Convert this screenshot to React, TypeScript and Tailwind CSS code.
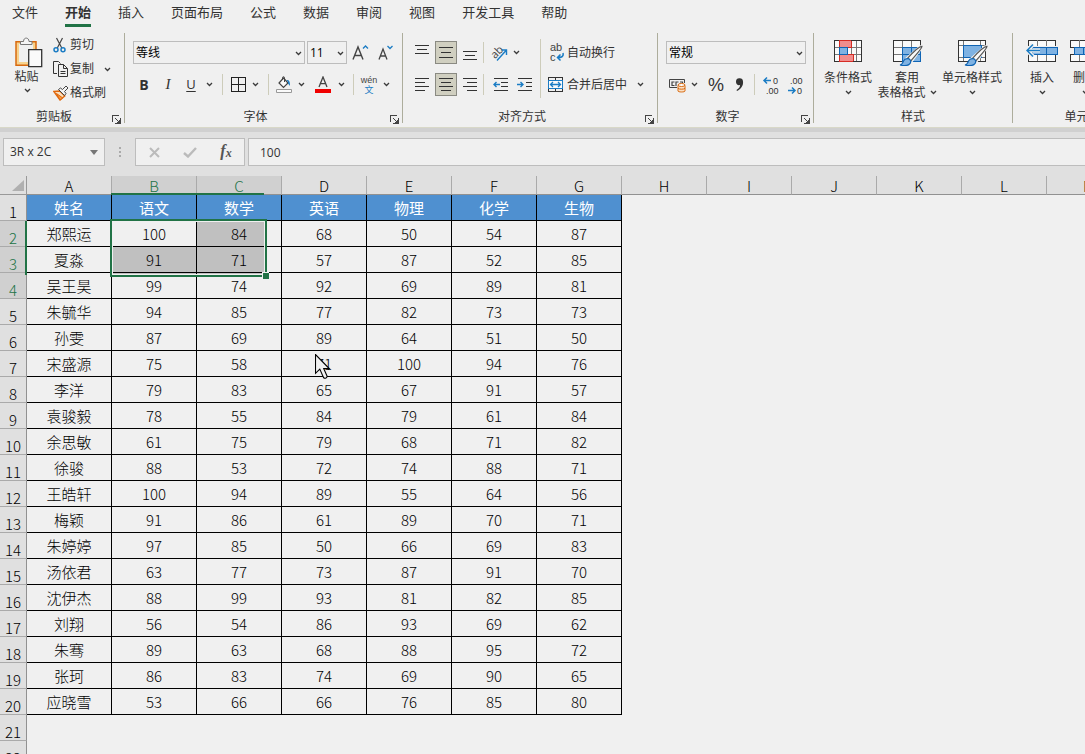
import type { ReactNode } from "react";

const tabs = ["文件", "开始", "插入", "页面布局", "公式", "数据", "审阅", "视图", "开发工具", "帮助"];
const columns = ["A", "B", "C", "D", "E", "F", "G", "H", "I", "J", "K", "L", "M"];
const subjects = ["姓名", "语文", "数学", "英语", "物理", "化学", "生物"];
const students: (string | number)[][] = [
  ["郑熙运", 100, 84, 68, 50, 54, 87],
  ["夏淼", 91, 71, 57, 87, 52, 85],
  ["吴王昊", 99, 74, 92, 69, 89, 81],
  ["朱毓华", 94, 85, 77, 82, 73, 73],
  ["孙雯", 87, 69, 89, 64, 51, 50],
  ["宋盛源", 75, 58, 71, 100, 94, 76],
  ["李洋", 79, 83, 65, 67, 91, 57],
  ["袁骏毅", 78, 55, 84, 79, 61, 84],
  ["余思敏", 61, 75, 79, 68, 71, 82],
  ["徐骏", 88, 53, 72, 74, 88, 71],
  ["王皓轩", 100, 94, 89, 55, 64, 56],
  ["梅颖", 91, 86, 61, 89, 70, 71],
  ["朱婷婷", 97, 85, 50, 66, 69, 83],
  ["汤依君", 63, 77, 73, 87, 91, 70],
  ["沈伊杰", 88, 99, 93, 81, 82, 85],
  ["刘翔", 56, 54, 86, 93, 69, 62],
  ["朱骞", 89, 63, 68, 88, 95, 72],
  ["张珂", 86, 83, 74, 69, 90, 65],
  ["应晓雪", 53, 66, 66, 76, 85, 80],
];

function Chevron({ className = "" }: { className?: string }) {
  return (
    <svg width="7" height="5" viewBox="0 0 7 5" className={`shrink-0 ${className}`} aria-hidden="true">
      <path d="M1 1l2.5 2.5L6 1" fill="none" stroke="#3b3b3b" strokeWidth="1.3" />
    </svg>
  );
}

function Drop({ label }: { label: string }) {
  return (
    <button aria-label={label} className="flex h-[22px] w-4 shrink-0 items-center justify-center">
      <Chevron />
    </button>
  );
}

function Tool({ label, active, className = "w-[22px]", children }: { label: string; active?: boolean; className?: string; children: ReactNode }) {
  return (
    <button
      aria-label={label}
      className={`flex h-[23px] shrink-0 items-center justify-center ${className} ${active ? "border border-[#8a8a82] bg-[#d0cfc0]" : ""}`}
    >
      {children}
    </button>
  );
}

function Rule() {
  return <span className="h-[21px] w-px shrink-0 bg-[#cdccba]" />;
}

function Group({ label, launcher, className, children }: { label: string; launcher?: boolean; className: string; children: ReactNode }) {
  return (
    <section aria-label={label} className={`flex shrink-0 flex-col justify-between border-r border-[#adad9c] ${className}`}>
      {children}
      <div className="flex h-3 items-center">
        <span className="flex-1 text-center leading-3">{label}</span>
        {launcher && (
          <button aria-label={`${label}设置`} className="flex w-4 justify-center pt-1">
            <svg width="9" height="9" viewBox="0 0 9 9" fill="none" stroke="#444" shapeRendering="crispEdges">
              <path d="M.5 7V.5H7M8.500 3v5.500H3" />
              <path d="M3 3l4 4M7.500 4.500v3h-3" />
            </svg>
          </button>
        )}
      </div>
    </section>
  );
}

function AlignIcon({ rows, y = 1, gap = 4 }: { rows: [number, number][]; y?: number; gap?: number }) {
  return (
    <svg width="16" height="15" viewBox="0 0 16 15" stroke="#333" shapeRendering="crispEdges">
      {rows.map(([a, b], i) => (
        <path key={i} d={`M${a} ${y + i * gap + 0.5}H${b}`} />
      ))}
    </svg>
  );
}

function SelectBox({ label, value, className }: { label: string; value: string; className: string }) {
  return (
    <div className={`relative h-[23px] shrink-0 ${className}`}>
      <select aria-label={label} defaultValue={value} className="h-full w-full appearance-none border border-[#bdbdbd] bg-[#f0f0f0] pl-0.5 text-black outline-none">
        <option>{value}</option>
      </select>
      <Chevron className="pointer-events-none absolute right-[3px] top-2.5" />
    </div>
  );
}

function PasteIcon() {
  return (
    <svg width="28" height="31" viewBox="0 0 28 31" fill="none" className="ml-1 shrink-0">
      <path d="M1 4h20v24H1z" fill="#f7d28c" />
      <path d="M4 7h14v18H4z" fill="#f0f0f0" />
      <path d="M21 13V4.700H1v23.500h12" stroke="#d8690f" strokeWidth="1.500" />
      <path d="M5.500 7.500v-3h3C8.500-.2 14 .1 14 4.500h3v3z" fill="#f5f5f5" stroke="#777" />
      <path d="M13.700 12.700h13v17h-13z" fill="#fafafa" stroke="#333" strokeWidth="1.300" />
    </svg>
  );
}
function CutIcon() {
  return (
    <svg width="16" height="16" viewBox="0 0 16 16" fill="none">
      <path d="M3.500 1l5.300 10M9.500 1L4.300 11" stroke="#444" strokeWidth="1.200" />
      <circle cx="3" cy="12.800" r="2" stroke="#1b7cc4" strokeWidth="1.500" />
      <circle cx="10" cy="12.800" r="2" stroke="#1b7cc4" strokeWidth="1.500" />
    </svg>
  );
}
function CopyIcon() {
  return (
    <svg width="17" height="16" viewBox="0 0 17 16" fill="none" stroke="#333">
      <path d="M4 12.500H.5V.5h5l2 2" />
      <path d="M5.500 3.500h5l4 4v8h-9zM10.500 3.500v4h4M7.500 10.500h5M7.500 12.500h5" />
    </svg>
  );
}
function BrushIcon() {
  return (
    <svg width="17" height="16" viewBox="0 0 17 16" fill="none">
      <path d="M.8 6.500l6-.5 5 5L7 15z" fill="#fae0c0" stroke="#e0670c" strokeWidth="1.400" />
      <path d="M3.500 8.500L9.800 13 7 15z" fill="#f39a45" stroke="#e0670c" />
      <path d="M5.500 4.500l2-1.500 2 1.500L13 1l2 2-3.500 3.500 1.500 2-1.500 2z" fill="#f3f3f3" stroke="#444" />
    </svg>
  );
}
function PaintBrush() {
  return (
    <g>
      <path d="M29.500 7.500L16 19.300l3 2.500z" stroke="#f0f0f0" strokeWidth="4" />
      <path d="M30 7.300c-2.500 0-10 7-14.500 12l3.300 2.700C23 17 30.500 9 30 7.300z" fill="#fafafa" stroke="#555" strokeWidth="1.200" />
      <path d="M8 26c2.500-.5 2.500-2 3.500-4 1.500-3 6-3 7-.5 1 3-2 6.500-10.500 4.500z" fill="#7fb2e2" stroke="#0f64b4" strokeWidth="1.200" />
    </g>
  );
}
function ConditionalIcon() {
  return (
    <svg width="30" height="27" viewBox="0 0 30 27" fill="none" shapeRendering="crispEdges">
      <path d="M1 1h27v21H1z" fill="#fafafa" stroke="#333" />
      <path d="M1 8h27M1 15h27M6 1v21M18 1v21M23 1v21" stroke="#777" />
      <path d="M6 1h12v7H6zM6 15h14v7H6z" fill="#f08d8d" stroke="#d62c24" />
      <path d="M6 8h8v7H6z" fill="#7fb2e2" stroke="#0f64b4" />
      <path d="M1 1h5M18 1h10v21h-8M6 22H1V1" stroke="#333" />
    </svg>
  );
}
function TableFormatIcon() {
  return (
    <svg width="31" height="27" viewBox="0 0 31 27" fill="none">
      <g shapeRendering="crispEdges">
        <path d="M1 1h27v21H1z" fill="#fafafa" />
        <path d="M1 8h27M1 15h27M10 1v21M19 1v21" stroke="#777" />
        <path d="M10 8h18v14H10z" fill="#7fb2e2" stroke="#0f64b4" />
        <path d="M10 15h18M19 8v14" stroke="#0f64b4" />
        <path d="M28 8V1H1v21h9" stroke="#333" />
      </g>
      <PaintBrush />
    </svg>
  );
}
function CellStyleIcon() {
  return (
    <svg width="31" height="27" viewBox="0 0 31 27" fill="none">
      <g shapeRendering="crispEdges">
        <path d="M1 1h27v21H1z" fill="#fafafa" />
        <path d="M1 6h27M1 18h27M6 1v21M23 1v21" stroke="#777" />
        <path d="M1 1h27v21H1z" stroke="#333" />
        <path d="M6 6h18v12H6z" fill="#7fb2e2" stroke="#0f64b4" />
      </g>
      <PaintBrush />
    </svg>
  );
}
function InsertIcon() {
  return (
    <svg width="32" height="27" viewBox="0 0 32 27" fill="none">
      <g shapeRendering="crispEdges">
        <path d="M2 1h27v21H2z" fill="#fafafa" stroke="#333" />
        <path d="M11 1v21M20 1v21" stroke="#777" />
        <path d="M0 7h32v9H0z" fill="#f0f0f0" />
        <path d="M2 8h27M2 15h27" stroke="#333" />
        <path d="M6 8h25v7H6zM20 8v7" fill="#7fb2e2" stroke="#0f64b4" />
      </g>
      <path d="M14 11.500H1M7 5.500l-6 6 6 6" stroke="#f0f0f0" strokeWidth="4" />
      <path d="M14 11.500H1M7 5.500l-6 6 6 6" stroke="#1b7cc4" strokeWidth="1.500" />
    </svg>
  );
}
function DeleteIcon() {
  return (
    <svg width="32" height="27" viewBox="0 0 32 27" fill="none" shapeRendering="crispEdges">
      <path d="M1 1h27v21H1z" fill="#fafafa" stroke="#333" />
      <path d="M10 1v21M19 1v21" stroke="#777" />
      <path d="M0 8h32v7H0z" fill="#f0f0f0" />
      <path d="M1 8h27M1 15h27" stroke="#333" />
      <path d="M5 8h18v7H5zM14 8v7" fill="#7fb2e2" stroke="#0f64b4" />
    </svg>
  );
}

function BigButton({ icon, lines, className }: { icon: ReactNode; lines: string[]; className: string }) {
  return (
    <button className={`flex shrink-0 flex-col items-center whitespace-nowrap pt-1.5 leading-[15px] ${className}`}>
      {icon}
      <span className="pt-1">{lines[0]}</span>
      <span className="flex h-[15px] items-center gap-1">
        {lines[1]}
        <Chevron />
      </span>
    </button>
  );
}

function Ribbon() {
  return (
    <div className="flex h-[90px]">
      <Group label="剪贴板" launcher className="w-[125px]">
        <div className="flex">
          <button className="flex w-[53px] flex-col items-center pt-1 leading-[15px]">
            <PasteIcon />
            <span className="pt-px">粘贴</span>
            <Chevron className="ml-0.5 mt-1" />
          </button>
          <div className="flex flex-col">
            <button className="flex h-6 items-center gap-px"><CutIcon />剪切</button>
            <div className="flex h-6 items-center">
              <button className="flex items-center"><CopyIcon />复制</button>
              <span className="w-[5px]" />
              <Drop label="复制选项" />
            </div>
            <button className="flex h-6 items-center"><BrushIcon />格式刷</button>
          </div>
        </div>
      </Group>

      <Group label="字体" launcher className="w-[278px]">
        <div className="flex flex-col gap-[9px] pl-2 pt-2">
          <div className="flex gap-0.5">
            <SelectBox label="字体名称" value="等线" className="w-[172px]" />
            <SelectBox label="字号" value="11" className="w-10" />
            <Tool label="增大字号" className="w-6">
              <svg width="18" height="18" viewBox="0 0 18 18" fill="none">
                <path d="M1 15.500L6 3l5 12.500M2.800 11.500h6.400" stroke="#444" strokeWidth="1.400" />
                <path d="M11 4.500l2.500-2.500L16 4.500" stroke="#1b7cc4" strokeWidth="1.300" />
              </svg>
            </Tool>
            <Tool label="减小字号" className="w-6">
              <svg width="18" height="18" viewBox="0 0 18 18" fill="none">
                <path d="M1 15.500L5 5l4 10.500M2.300 12h5.400" stroke="#444" strokeWidth="1.300" />
                <path d="M9.500 2l2.500 2.500L14.500 2" stroke="#1b7cc4" strokeWidth="1.300" />
              </svg>
            </Tool>
          </div>
          <div className="flex items-center">
            <Tool label="加粗"><b className="text-sm">B</b></Tool>
            <Tool label="倾斜" className="w-[26px]"><i className="font-['Liberation_Serif',serif] text-[15px]">I</i></Tool>
            <Tool label="下划线" className="w-5"><span className="text-[13px] underline underline-offset-2">U</span></Tool>
            <Drop label="下划线样式" />
            <span className="w-[5px]" />
            <Rule />
            <Tool label="边框" className="w-6 pl-1.5">
              <svg width="15" height="15" viewBox="0 0 15 15" fill="none" stroke="#222" shapeRendering="crispEdges">
                <path d="M.5.5h14v14H.5zM7.500 0v15M0 7.500h15" />
              </svg>
            </Tool>
            <Drop label="边框样式" />
            <span className="w-[5px]" />
            <Rule />
            <Tool label="填充颜色" className="w-6 pl-1.5">
              <svg width="16" height="17" viewBox="0 0 16 17" fill="none" className="shrink-0">
                <path d="M7.500 2L12 7l-4.500 4.500L3 7z" fill="#fafafa" stroke="#444" strokeWidth="1.200" />
                <path d="M6.500 4V1.500c0-1 2-1 2 0V6" stroke="#444" />
                <path d="M10.500 4c3-.5 3.500 2 3.500 6l-2-2.500V6z" fill="#1b7cc4" />
                <path d="M.5 13.500h15v3H.5z" fill="#fafafa" stroke="#999" />
              </svg>
            </Tool>
            <Drop label="填充颜色选项" />
            <Tool label="字体颜色" className="w-6 pl-1">
              <svg width="16" height="17" viewBox="0 0 16 17" fill="none">
                <path d="M4 11L8 1l4 10M5.300 7.700h5.400" stroke="#444" strokeWidth="1.300" />
                <path d="M0 13h16v4H0z" fill="#f00000" />
              </svg>
            </Tool>
            <Drop label="字体颜色选项" />
            <span className="w-1" />
            <Rule />
            <Tool label="显示拼音" className="w-6 pl-1.5">
              <span className="flex flex-col items-center font-['Liberation_Sans','Noto_Sans_CJK_SC',sans-serif] text-[9px] leading-[10px] text-[#444]">
                <span>wén</span>
                <span className="text-[#1b7cc4]">文</span>
              </span>
            </Tool>
            <Drop label="拼音选项" />
          </div>
        </div>
      </Group>

      <Group label="对齐方式" launcher className="w-[255px]">
        <div className="flex pl-2">
          <div className="flex w-[129px] flex-col gap-[9px] pt-2">
            <div className="flex items-center gap-0.5">
              <Tool label="顶端对齐"><AlignIcon rows={[[1, 15], [3, 13], [1, 15]]} y={0} /></Tool>
              <Tool label="垂直居中" active><AlignIcon rows={[[1, 15], [3, 13], [1, 15]]} y={2} gap={5} /></Tool>
              <Tool label="底端对齐"><AlignIcon rows={[[1, 15], [3, 13], [1, 15]]} y={6} /></Tool>
              <Rule />
              <div className="flex">
                <Tool label="方向" className="w-[22px] pl-1.5">
                  <svg width="18" height="18" viewBox="0 0 18 18" fill="none" className="shrink-0 overflow-visible">
                    <text x="0" y="12" fontSize="11" fill="#444" transform="rotate(-45 6 9)">ab</text>
                    <path d="M6 16.500L15.500 6M10.500 6H15.500v5" stroke="#1b7cc4" strokeWidth="1.400" />
                  </svg>
                </Tool>
                <Drop label="方向选项" />
              </div>
            </div>
            <div className="flex items-center gap-0.5">
              <Tool label="左对齐"><AlignIcon rows={[[1, 15], [1, 11], [1, 15], [1, 11]]} /></Tool>
              <Tool label="居中" active><AlignIcon rows={[[1, 15], [3, 13], [1, 15], [3, 13]]} /></Tool>
              <Tool label="右对齐"><AlignIcon rows={[[1, 15], [5, 15], [1, 15], [5, 15]]} /></Tool>
              <Rule />
              <span className="w-0.5" />
              <Tool label="减少缩进">
                <svg width="16" height="15" viewBox="0 0 16 15" fill="none">
                  <path d="M1 1.500h14M8 5.500h7M8 9.500h7M1 13.500h14" stroke="#333" shapeRendering="crispEdges" />
                  <path d="M7 7.500H1M3.500 5L1 7.500 3.500 10" stroke="#1b7cc4" strokeWidth="1.400" />
                </svg>
              </Tool>
              <Tool label="增加缩进">
                <svg width="16" height="15" viewBox="0 0 16 15" fill="none">
                  <path d="M1 1.500h14M9 5.500h6M9 9.500h6M1 13.500h14" stroke="#333" shapeRendering="crispEdges" />
                  <path d="M0 7.500h6M3.500 5L6 7.500 3.500 10" stroke="#1b7cc4" strokeWidth="1.400" />
                </svg>
              </Tool>
            </div>
          </div>
          <span className="mt-1.5 h-[59px] w-px bg-[#cdccba]" />
          <div className="flex flex-col items-start gap-[9px] pl-[7px] pt-2">
            <button className="flex h-[23px] items-center">
              <svg width="19" height="18" viewBox="0 0 19 18" fill="none" className="overflow-visible font-['Liberation_Sans',sans-serif]">
                <text x="2" y="7" fontSize="11" fill="#444">ab</text>
                <text x="2" y="17" fontSize="11" fill="#444">c</text>
                <path d="M15 9c1 4-2 4.500-5.500 4.500M12.500 10.500l-3 3 3 3" stroke="#1b7cc4" strokeWidth="1.500" />
              </svg>
              自动换行
            </button>
            <div className="flex items-center">
              <button className="flex h-[23px] items-center gap-1">
                <svg width="15" height="15" viewBox="0 0 15 15" fill="none">
                  <path d="M.5.5h14v14H.5zM7.500 0v4M7.500 11v4" stroke="#333" shapeRendering="crispEdges" />
                  <path d="M.5 3.500h14v8H.5z" fill="#fafafa" stroke="#1b7cc4" shapeRendering="crispEdges" />
                  <path d="M2.500 7.500h10M5 5L2.500 7.500 5 10M10 5l2.500 2.500L10 10" stroke="#1b7cc4" strokeWidth="1.300" />
                </svg>
                合并后居中
              </button>
              <span className="w-[5px]" />
              <Drop label="合并选项" />
            </div>
          </div>
        </div>
      </Group>

      <Group label="数字" launcher className="w-[156px]">
        <div className="flex flex-col gap-[9px] pl-2 pt-2">
          <SelectBox label="数字格式" value="常规" className="w-[140px]" />
          <div className="flex items-center">
            <Tool label="会计数字格式" className="w-5 pl-0.5">
              <svg width="18" height="16" viewBox="0 0 18 16" fill="none" className="shrink-0">
                <path d="M1.500 2.500h15v8h-15z" stroke="#444" />
                <path d="M6.500 5H4v3.500h2.500M8 9V5h2.500M12 5h2.500v3" stroke="#444" strokeWidth="1.200" />
                <path d="M9 6h9v10H9z" fill="#f0f0f0" />
                <path d="M10 8.500v5.500c0 1.300 7 1.300 7 0V8.500" fill="#fae0c5" stroke="#d8690f" />
                <ellipse cx="13.500" cy="8" rx="3.500" ry="1.500" fill="#fff" stroke="#d8690f" />
                <path d="M10 11.300c1 1.200 6 1.200 7 0" stroke="#d8690f" />
              </svg>
            </Tool>
            <Drop label="会计格式选项" />
            <Tool label="百分比样式" className="w-7"><span className="font-['Liberation_Sans',sans-serif] text-[18px]">%</span></Tool>
            <Tool label="千位分隔样式" className="w-5">
              <svg width="10" height="14" viewBox="0 0 10 14">
                <path d="M1 4a3.500 3.500 0 017-.5c.5 4-2 7.500-6 9.500L1.500 12C4 10.500 5 9 5 7 3 7.500 1 6.500 1 4z" fill="#333" />
              </svg>
            </Tool>
            <span className="w-1" />
            <Rule />
            <Tool label="增加小数位数" className="w-8">
              <svg width="16" height="18" viewBox="0 0 16 18" fill="none" className="overflow-visible font-['Liberation_Sans',sans-serif]">
                <path d="M8 4.500H1M4 1.500l-3 3 3 3" stroke="#1b7cc4" strokeWidth="1.500" />
                <text x="10" y="8" fontSize="9" fill="#333">0</text>
                <text x="3" y="18" fontSize="9" fill="#333">.00</text>
              </svg>
            </Tool>
            <Tool label="减少小数位数" className="w-4">
              <svg width="16" height="18" viewBox="0 0 16 18" fill="none" className="shrink-0 overflow-visible font-['Liberation_Sans',sans-serif]">
                <path d="M1 14.500h7M5 11.500l3 3-3 3" stroke="#1b7cc4" strokeWidth="1.500" />
                <text x="3" y="8" fontSize="9" fill="#333">.00</text>
                <text x="10" y="18" fontSize="9" fill="#333">0</text>
              </svg>
            </Tool>
          </div>
        </div>
      </Group>

      <Group label="样式" className="w-[199px]">
        <div className="flex pl-1">
          <BigButton icon={<ConditionalIcon />} lines={["条件格式"]} className="w-[60px]" />
          <BigButton icon={<TableFormatIcon />} lines={["套用", "表格格式"]} className="w-[58px]" />
          <BigButton icon={<CellStyleIcon />} lines={["单元格样式"]} className="w-[72px]" />
        </div>
      </Group>

      <Group label="单元格" className="w-[140px]">
        <div className="flex pl-2">
          <BigButton icon={<InsertIcon />} lines={["插入"]} className="w-[42px]" />
          <BigButton icon={<DeleteIcon />} lines={["删除"]} className="w-[44px]" />
          <BigButton icon={<CellStyleIcon />} lines={["格式"]} className="w-[42px]" />
        </div>
      </Group>
    </div>
  );
}

function FormulaBar() {
  return (
    <div className="flex h-11 shrink-0 items-start bg-[#e0e0e0] pl-[3px] pt-1.5">
      <div className="flex h-7 w-[102px] shrink-0 items-center border border-[#bdbdbd] bg-[#f0f0f0]">
        <input aria-label="名称框" defaultValue="3R x 2C" className="w-20 bg-transparent pl-1.5 outline-none" />
        <button aria-label="名称列表" className="flex flex-1 justify-center">
          <svg width="8" height="5" viewBox="0 0 8 5"><path d="M0 0h8L4 5z" fill="#777" /></svg>
        </button>
      </div>
      <div className="flex h-7 w-[30px] shrink-0 items-center justify-center">
        <svg width="2" height="10" viewBox="0 0 2 10" fill="#aaa"><path d="M0 0h2v2H0zM0 4h2v2H0zM0 8h2v2H0z" /></svg>
      </div>
      <div className="flex h-7 w-[110px] shrink-0 items-center border border-[#bdbdbd] bg-[#f0f0f0]">
        <button aria-label="取消" className="flex flex-1 justify-center">
          <svg width="11" height="11" viewBox="0 0 11 11"><path d="M1 1l9 9M10 1l-9 9" stroke="#bbb" strokeWidth="2" /></svg>
        </button>
        <button aria-label="输入" className="flex flex-1 justify-center">
          <svg width="14" height="11" viewBox="0 0 14 11" fill="none"><path d="M1 6l4 3.500L13 1" stroke="#bbb" strokeWidth="2.400" /></svg>
        </button>
        <button aria-label="插入函数" className="flex flex-1 justify-center font-['Liberation_Serif',serif] text-base italic leading-4 text-[#555]">
          <b>f</b><span className="pt-0.5 text-xs font-bold">x</span>
        </button>
      </div>
      <input aria-label="编辑栏" defaultValue="100" className="ml-[3px] h-7 min-w-0 flex-1 border border-r-0 border-[#bdbdbd] bg-[#f0f0f0] pl-[11px] outline-none" />
    </div>
  );
}

function Sheet() {
  const rows: (string | number)[][] = [subjects, ...students, [], []];
  return (
    <div className="relative flex-1 overflow-hidden">
      <table className="w-[1132px] table-fixed border-separate border-spacing-0 text-center font-['Noto_Sans_CJK_SC',sans-serif] text-[15px] font-light leading-[18px] text-black">
        <colgroup>
          <col className="w-[27px]" />
          {columns.map((c) => <col key={c} className="w-[85px]" />)}
        </colgroup>
        <thead>
          <tr className="h-[19px]">
            <th className="border-b border-r border-[#999] bg-[#e0e0e0] p-0">
              <svg width="12" height="11" viewBox="0 0 12 11" className="ml-3"><path d="M12 0v11H0z" fill="#b0b0b0" /></svg>
            </th>
            {columns.map((c, i) => (
              <th
                key={c}
                scope="col"
                className={`border-b border-r border-b-[#919191] border-r-[#aaa] p-0 pt-0.5 font-light leading-4 ${i === 1 || i === 2 ? "bg-[#d0d0d0] text-[#217346]" : "bg-[#e0e0e0]"}`}
              >
                {c}
              </th>
            ))}
          </tr>
        </thead>
        <tbody>
          {rows.map((row, r) => (
            <tr key={r} className="h-[26px]">
              <th
                scope="row"
                className={`border-b border-r border-b-[#aaa] border-r-[#919191] p-0 align-bottom font-light leading-4 ${r > 0 && r < 4 ? "bg-[#d0d0d0] text-[#217346]" : "bg-[#e0e0e0]"}`}
              >
                {r + 1}
              </th>
              {columns.map((c, i) => (
                <td
                  key={c}
                  className={`p-0 ${i < row.length ? "border-b border-r border-black" : ""} ${r === 0 && i < row.length ? "bg-[#4f90d0] font-normal text-white" : ""}`}
                >
                  {row[i]}
                </td>
              ))}
            </tr>
          ))}
        </tbody>
      </table>

      <div className="pointer-events-none absolute left-[111px] top-[17px] h-0.5 w-[153px] bg-[#217346]" />
      <div className="pointer-events-none absolute left-[25px] top-[45px] h-[54px] w-0.5 bg-[#217346]" />
      <div className="pointer-events-none absolute left-[110px] top-[43px] h-[58px] w-[157px] border-2 border-[#217346]">
        <div className="h-full w-full border border-[#f0f0f0]">
          <div className="ml-auto h-[25px] w-[67px] bg-black/20" />
          <div className="h-[27px] bg-black/20" />
        </div>
        <div className="absolute -bottom-[4px] -right-[4px] h-[7px] w-[7px] border-l border-t border-[#f0f0f0] bg-[#217346]" />
      </div>
      <svg width="16" height="27" viewBox="0 0 16 27" className="pointer-events-none absolute left-[315px] top-[178px]">
        <path d="M.5.500v18.800l4.300-4.200L8.500 23.500c1.500 1.500 4 .2 3.500-1.500L8.700 14.500h5.500z" fill="#f0f0f0" stroke="#000" strokeWidth="1.100" />
      </svg>
    </div>
  );
}

export default function App() {
  return (
    <div className="flex h-screen flex-col overflow-hidden bg-[#f0f0f0] font-['Open_Sans','Noto_Sans_CJK_SC',sans-serif] text-xs text-[#333]">
      <nav className="flex h-[33px] shrink-0 items-start gap-[27px] pl-3 text-[13px]">
        {tabs.map((t) => (
          <a
            key={t}
            href="#"
            aria-current={t === "开始" ? "page" : undefined}
            className={`h-[27px] shrink-0 border-b-[3px] pt-[3px] leading-[18px] ${t === "开始" ? "border-[#217346] font-bold" : "border-transparent"}`}
          >
            {t}
          </a>
        ))}
      </nav>
      <header className="shrink-0 overflow-hidden pb-1">
        <Ribbon />
      </header>
      <div className="h-[5px] shrink-0 border-t border-[#d8d8c8] bg-[#d0d0d0]" />
      <FormulaBar />
      <Sheet />
    </div>
  );
}
